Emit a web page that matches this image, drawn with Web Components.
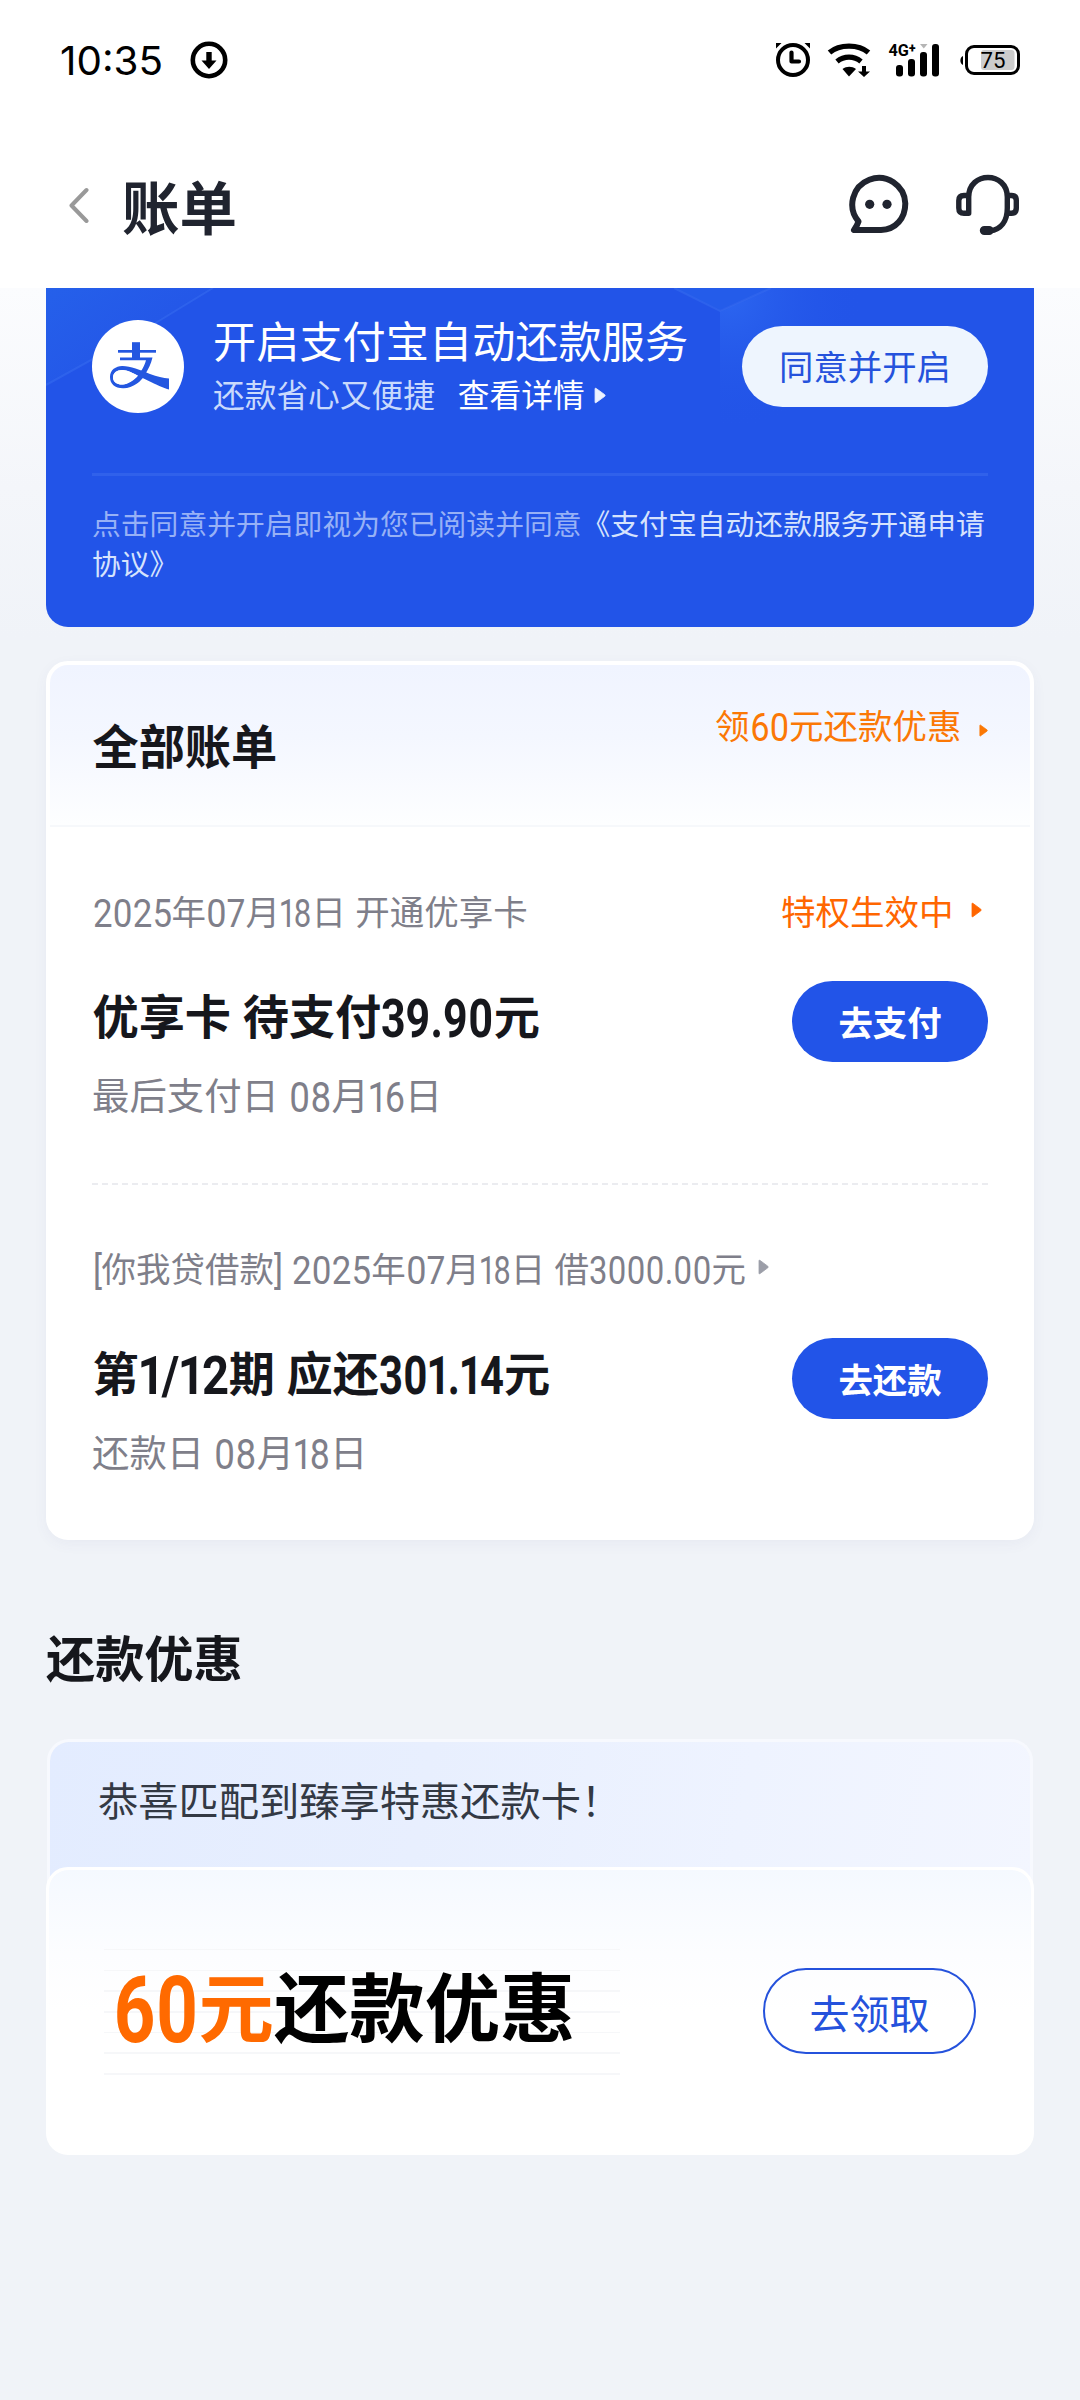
<!DOCTYPE html>
<html lang="zh-CN">
<head>
<meta charset="utf-8">
<title>账单</title>
<style>
html,body{margin:0;padding:0}
body{width:1080px;height:2400px;overflow:hidden;background:#f0f3f8;font-family:"Noto Sans CJK SC",sans-serif;color:#16171c}
</style>
</head>
<body>
<bill-screen></bill-screen>

<script>
const define = (name, html, init) => {
  const tpl = document.createElement('template');
  tpl.innerHTML = html;
  customElements.define(name, class extends HTMLElement {
    constructor() {
      super();
      this.attachShadow({mode: 'open'}).appendChild(tpl.content.cloneNode(true));
    }
    connectedCallback() { if (init) init(this, this.shadowRoot); }
  });
};

/* Small right-pointing marker */
define('tri-mark', `
<style>
:host{display:inline-flex;flex:none;width:11px;height:16px}
svg{width:100%;height:100%;display:block}
</style>
<svg viewBox="0 0 11 16" preserveAspectRatio="none"><path d="M1 1.8 Q1 .6 2 1.4 L9.8 7.2 Q10.6 8 9.8 8.8 L2 14.6 Q1 15.4 1 14.2Z" fill="currentColor" stroke="currentColor" stroke-width=".8"/></svg>`);

define('pill-button', `
<style>
:host{display:flex;box-sizing:border-box;flex:none;justify-content:center;align-items:center;width:196px;height:81px;border-radius:41px;background:#2254e8;color:#fff;font-size:34.4px;font-weight:700;line-height:50px;white-space:nowrap;padding-bottom:2px}
:host([kind=light]){width:246px;background:#eef5fe;color:#2552dc;font-weight:400;padding-bottom:3px}
:host([kind=line]){width:213px;height:86px;border-radius:43px;border:2.5px solid #2552dc;background:transparent;color:#2552dc;font-size:40px;font-weight:400;padding-bottom:0}
</style><slot></slot>`);

define('status-bar', `
<style>
:host{display:flex;height:120px;box-sizing:border-box;padding:0 60px 0 60px;align-items:center;background:#fff;color:#000}
.time{font:400 39.4px/48px Inter,sans-serif;width:103px;white-space:nowrap;margin-top:2px;--dn:39.4px;--df:Inter,sans-serif;--dv:0}
.dl{margin-left:27px}
.sp{flex:1}
svg{display:block;flex:none}
</style>
<span class="time"><din-num w="103">10:35</din-num></span>
<svg class="dl" width="38" height="38" viewBox="0 0 38 38"><circle cx="19" cy="19" r="16.2" fill="none" stroke="#000" stroke-width="4.6"/><path d="M16.3 11h5.4v8.5h4.8L19 28l-7.5-8.500h4.800z"/></svg>
<span class="sp"></span>
<svg width="244" height="36" viewBox="776 42 244 36">
 <g fill="none" stroke="#000">
  <circle cx="793" cy="60" r="15" stroke-width="4"/>
  <path d="M791.500 52.500v9h7.500" stroke-width="4.200" stroke-linejoin="round" stroke-linecap="round"/>
  <path d="M829.500 52.500c10-8.500 29-8.500 39 0" stroke-width="5.400"/>
  <path d="M837 61.500c7-5.800 17-5.800 24 0" stroke-width="5.200"/>
 </g>
 <path d="M776 48.500V43h5.500z M810 48.500V43h-5.500z"/>
 <path d="M842.500 69c4-3 9.500-3 13.500 0L849 76.500z"/>
 <path d="M862 66h4v5.500h4l-6 5.500-6-5.500h4z"/>
 <text x="888.500" y="55.500" font-family="Roboto,sans-serif" font-weight="700" font-size="16" textLength="27" lengthAdjust="spacingAndGlyphs">4G<tspan font-size="12" font-weight="900" dy="-3.500">+</tspan></text>
 <rect x="896" y="65" width="7" height="11.500" rx="3"/><rect x="908" y="59" width="7" height="17.500" rx="3"/><rect x="920" y="52" width="7" height="24.500" rx="3"/><rect x="932" y="44" width="7" height="32.500" rx="3"/>
 <path d="M920 44h7.500l-3.700 4.500z" fill="#b5b5b5"/>
 <path d="M963 56v9c-3.500-1.500-3.500-7.500 0-9z"/>
 <rect x="981" y="50" width="33.500" height="20" rx="3" fill="#ccc"/>
 <rect x="966.500" y="46.500" width="52" height="27" rx="7.500" fill="none" stroke="#000" stroke-width="3"/>
 <text x="980.500" y="68" font-family="Roboto,sans-serif" font-size="22" textLength="25" lengthAdjust="spacingAndGlyphs">75</text>
</svg>`);

define('nav-bar', `
<style>
:host{display:flex;height:168px;box-sizing:border-box;padding:2px 60px 0 69px;align-items:center;background:#fff;color:#20242f}
h1{margin:0 0 0 33px;font-size:57.500px;line-height:80px;font-weight:700;flex:1}
svg{display:block;flex:none}
.talk{margin-right:46px}
</style>
<svg width="20" height="36" viewBox="0 0 20 36" fill="none" stroke="#999" stroke-width="4" stroke-linecap="round" stroke-linejoin="round"><path d="M17.500 3 2.500 18.500 17.500 34"/></svg>
<h1>账单</h1>
<svg class="talk" width="62" height="64" viewBox="848 173 62 64"><path d="M855.500 230H881C896 229.500 905.300 218 905.300 203.500A26.500 26.500 0 1 0 858.500 221.500Q857 226 854 230Z" fill="none" stroke="#20242f" stroke-width="6" stroke-linejoin="round"/><circle cx="869.700" cy="204.300" r="4.600" fill="#20242f"/><circle cx="887" cy="204.300" r="4.600" fill="#20242f"/></svg>
<svg width="64" height="64" viewBox="956 173 64 64" fill="none" stroke="#20242f" stroke-width="5.400" stroke-linejoin="round"><path d="M968.700 213.300H964Q958.800 213.300 958.800 208V200.500Q958.800 195.500 964 195.500H968.700ZM968.700 197C968.700 171 1007.300 171 1007.300 197V208C1007.300 221 1001 229.500 990 230.800M1007.300 195.500H1011.500Q1016.300 195.500 1016.300 200.500V208Q1016.300 213.300 1011.500 213.300H1007.300"/><rect x="982.500" y="228.700" width="8.500" height="3.600" rx="1.800"/></svg>`);

/* Blue auto-repayment banner */
define('autopay-card', `
<style>
:host{display:grid;height:339px;border-radius:0 0 22px 22px;overflow:hidden;background:#2254e8;color:#fff}
.art,.in{grid-area:1/1}
.art{display:block;width:988px;height:339px}
.in{padding:0 46px;display:flex;flex-direction:column}
.row{display:flex;height:185px}
.logo{width:92px;height:93px;margin-top:32px;flex:none}
.txt{margin-left:29px;flex:1}
.a{font-size:43.200px;line-height:60px;margin-top:20.500px;white-space:nowrap}
.b{font-size:31.700px;line-height:46px;margin-top:1.500px;display:flex;align-items:center;color:#c9dafc}
.b b{font-weight:400;color:#fff;margin-left:23px}
.b tri-mark{margin-left:9.500px;width:12px;height:17px;color:#edf3ff;margin-top:5px}
pill-button{margin-top:38px}
hr{border:0;margin:0;height:2.500px;background:#3061eb}
p{margin:27.500px 0 0;font-size:28.800px;line-height:40px;color:#97b1f6;width:896px;white-space:nowrap}
p span{color:#d6e3fd}
</style>
<svg class="art" viewBox="46 288 988 339">
 <defs>
  <linearGradient id="l" gradientUnits="userSpaceOnUse" x1="46" y1="288" x2="110" y2="370"><stop offset="0" stop-color="#2560ea"/><stop offset="1" stop-color="#2457e8"/></linearGradient>
  <radialGradient id="r" gradientUnits="userSpaceOnUse" cx="728" cy="296" r="135"><stop offset="0" stop-color="#2c66f0"/><stop offset="1" stop-color="#2254e8" stop-opacity="0"/></radialGradient>
 </defs>
 <path d="M46 288H213L131 338 46 385Z" fill="url(#l)"/>
 <path d="M674 288 720 310 771 288Z" fill="#245cea"/>
 <path d="M720 311 771 288H900V460H720Z" fill="url(#r)"/>
 <path d="M674 288 720 311 771 288M213 288 131 338 46 385" fill="none" stroke="#376cee" stroke-width="2" opacity=".55"/>
</svg>
<div class="in">
 <div class="row">
  <svg class="logo" viewBox="0 0 92 93"><ellipse cx="46" cy="46.500" rx="46" ry="46.500" fill="#fff"/>
   <g fill="#2457e0"><rect x="40" y="22.200" width="8" height="17"/><rect x="26" y="30" width="38" height="2.700"/><path d="M28 37.500H60.500C59 44 56 50 53 54.500 50 61 41 68 31.500 68.300 23 68.500 18 64 18 57 18 49.500 24 46.300 30 46 38 45.800 48 50 58 54 65 56.500 71 58 77 58.500V69.500C72 68 66 65.500 63 64L47.500 56.500C41 53 35 50 30.500 50 24.500 50 21 53 21 57.500 21 62.500 26 65 31 64.500 38 63.500 45 57 48 52.500 51 48.500 53 44 54 40.200H28Z" fill-rule="nonzero"/></g>
   <path d="M21 57.500C21 53 24.500 50 30.500 50 35 50 41 53 46 55.700 42 60.500 36 64 31 64.500 26 65 21 62.500 21 57.500Z" fill="#fff"/></svg>
  <div class="txt"><div class="a">开启支付宝自动还款服务</div><div class="b">还款省心又便捷<b>查看详情</b><tri-mark></tri-mark></div></div>
  <pill-button kind="light">同意并开启</pill-button>
 </div>
 <hr>
 <p>点击同意并开启即视为您已阅读并同意<span>《支付宝自动还款服务开通申请</span><br><span>协议》</span></p>
</div>`);

define('bill-item', `
<style>
:host{display:block;padding:57px 42px 65px}
.top{display:flex;height:50px;line-height:50px;font-size:34.500px;color:#7f7f8a;align-items:center;white-space:nowrap;word-spacing:1.600px;padding-left:.5px}
.sp{flex:1}
.main{display:flex;justify-content:space-between;margin-top:45px}
.title{font-size:46.200px;height:70px;line-height:68px;font-weight:700;word-spacing:1.200px;white-space:nowrap;--dn:1.180em;padding-left:.5px}
.sub{margin-top:18.500px;font-size:37.400px;height:50px;line-height:50px;color:#7f7f8a;word-spacing:1.600px;white-space:nowrap;--dn:1.150em}
.act{margin-top:1px}
.main{height:138px}
</style>
<div class="top"><slot name="info"></slot><slot name="mark"></slot><span class="sp"></span><slot name="tag"></slot></div>
<div class="main"><div><div class="title"><slot name="title"></slot></div><div class="sub"><slot name="due"></slot></div></div><div class="act"><slot name="action"></slot></div></div>`);

define('bill-card', `
<style>
:host{display:block;box-sizing:border-box;margin-top:34px;height:879px;border:4px solid #fff;border-radius:22px;background:#fff;box-shadow:0 4px 14px rgba(70,80,130,.05)}
header{display:flex;justify-content:space-between;align-items:flex-start;height:160px;padding:0 42px;border-bottom:2px solid #f6f8fb;margin-bottom:1px;border-radius:18px 18px 0 0;background:linear-gradient(#f0f4ff,#f4f7ff 45%,#fdfeff)}
h2{margin:49px 0 0 .5px;font-size:46.200px;line-height:60px;font-weight:700}
.link{display:flex;align-items:center;margin-top:34px;font-size:34.500px;line-height:50px;height:50px;color:#fb7805}
.link tri-mark{width:9px;height:13px;margin:12px 0 0 17.500px}
.tag{color:#ff6600;display:flex;align-items:center}
.tag tri-mark{margin:-1px 6.500px 0 17px}
.go{color:#9c9ea8;margin:-1px 0 0 11.500px}
.dash{height:2px;margin:0 42px;background:repeating-linear-gradient(90deg,#ebecf0 0 6px,transparent 6px 10px)}
</style>
<header><h2>全部账单</h2><div class="link"><span>领<din-num w="39.400">60</din-num>元还款优惠</span><tri-mark></tri-mark></div></header>
<bill-item>
 <span slot="info"><din-num w="79">2025</din-num>年<din-num w="39.400">07</din-num>月<din-num w="31.500">18</din-num>日 开通优享卡</span>
 <span slot="tag" class="tag">特权生效中<tri-mark></tri-mark></span>
 <span slot="title">优享卡 待支付<din-num w="112.500">39.90</din-num>元</span>
 <span slot="due">最后支付日 <din-num w="42.500">08</din-num>月<din-num w="36">16</din-num>日</span>
 <pill-button slot="action">去支付</pill-button>
</bill-item>
<div class="dash"></div>
<bill-item>
 <span slot="info"><din-num w="9">[</din-num>你我贷借款<din-num w="9">]</din-num> <din-num w="79">2025</din-num>年<din-num w="39.400">07</din-num>月<din-num w="31">18</din-num>日 借<din-num w="122.500">3000.00</din-num>元</span>
 <tri-mark slot="mark" class="go"></tri-mark>
 <span slot="title">第<din-num w="90">1/12</din-num>期 应还<din-num w="125">301.14</din-num>元</span>
 <span slot="due">还款日 <din-num w="42.500">08</din-num>月<din-num w="36">18</din-num>日</span>
 <pill-button slot="action">去还款</pill-button>
</bill-item>`);

define('promo-card', `
<style>
:host{display:block;margin-top:54px}
.band{box-sizing:border-box;height:160px;margin:0 1px;padding:29px 48px;border:3px solid #f7f9fe;border-bottom:0;border-radius:22px 22px 0 0;background:linear-gradient(100deg,#e3ecff,#e8effe 38%,#eef3ff 70%,#f3f6ff) padding-box;font-size:40.250px;line-height:56px;color:#333944;white-space:nowrap}
.card{box-sizing:border-box;height:288px;margin-top:-32px;border:3px solid #fff;border-radius:22px;background:linear-gradient(#f5f9ff,#fcfdff 30%,#fff 50%) padding-box,#fff;display:flex;justify-content:space-between;padding:79px 55px 0}
.amount{width:516px;height:127px;box-sizing:border-box;padding-left:9px;font-size:75.400px;line-height:110px;font-weight:700;color:#000;white-space:nowrap;background:repeating-linear-gradient(#f6f7f9 0 1.500px,transparent 1.500px 20.700px);--dn:1.240em;--dv:-.065em}
.amount em{font-style:normal;color:#ff6a00}
pill-button{margin-top:19px;padding-top:1px}
</style>
<div class="band">恭喜匹配到臻享特惠还款卡！</div>
<div class="card"><div class="amount"><em><din-num w="85.500">60</din-num>元</em>还款优惠</div><pill-button kind="line">去领取</pill-button></div>`);

define('bill-screen', `
<style>
:host{display:flex;flex-direction:column;width:1080px;height:2400px;background:#f0f3f8}
main{flex:1;padding:0 46px;background:linear-gradient(#fbfcfe,#f4f6fa 200px,#f0f3f8 350px)}
h3{margin:86px 0 0;font-size:49.200px;line-height:60px;font-weight:700;height:59px}
</style>
<status-bar></status-bar>
<nav-bar></nav-bar>
<main>
 <autopay-card></autopay-card>
 <bill-card></bill-card>
 <h3>还款优惠</h3>
 <promo-card></promo-card>
</main>`);

/* Condensed numerals: scaled horizontally to the advance width given in w */
define('din-num', `
<style>
:host{display:inline-block;font-family:var(--df,Roboto,sans-serif);font-size:var(--dn,1.130em);line-height:0;vertical-align:var(--dv,-.055em);white-space:nowrap;font-feature-settings:"pnum"}
span{display:inline-block;transform-origin:0 50%}
</style><span><slot></slot></span>`, (el, root) => {
  const s = root.querySelector('span'), w = +el.getAttribute('w');
  const n = s.getBoundingClientRect().width;
  el.style.width = w + 'px';
  s.style.transform = 'scaleX(' + w / n + ')';
});
</script>
</body>
</html>
